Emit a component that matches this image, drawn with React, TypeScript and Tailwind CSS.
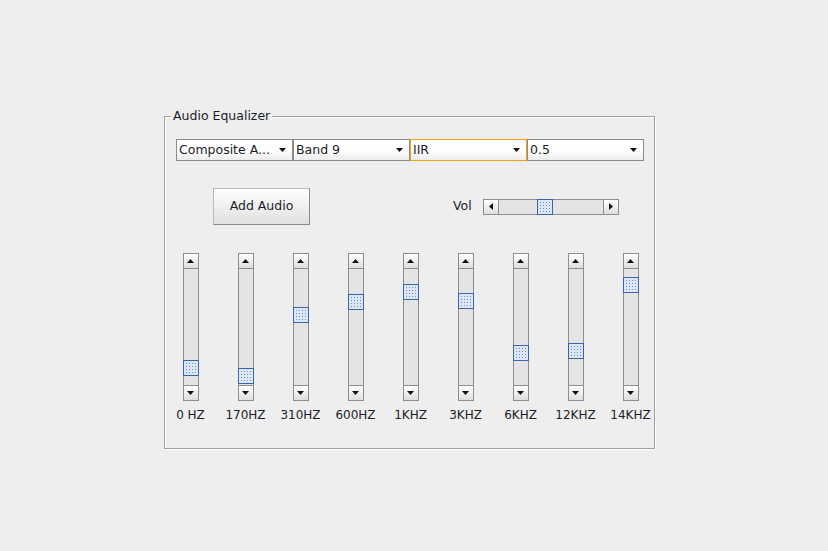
import React from "react";

const font = { fontFamily: '"DejaVu Sans", Verdana, sans-serif' };

const combos = [
  { label: "Composite A...", focused: false },
  { label: "Band 9", focused: false },
  { label: "IIR", focused: true },
  { label: "0.5", focused: false },
];

// thumb offset inside the 116px track
const bands = [
  { label: "0 HZ", pos: 91 },
  { label: "170HZ", pos: 99 },
  { label: "310HZ", pos: 38 },
  { label: "600HZ", pos: 25 },
  { label: "1KHZ", pos: 15 },
  { label: "3KHZ", pos: 24 },
  { label: "6KHZ", pos: 76 },
  { label: "12KHZ", pos: 74 },
  { label: "14KHZ", pos: 8 },
];

const Arrow = ({ dir }: { dir: "up" | "down" | "left" | "right" }) => {
  const pts = {
    up: "0,4 7,4 3.5,0",
    down: "0,0 7,0 3.5,4",
    left: "4,0 4,7 0,3.5",
    right: "0,0 0,7 4,3.5",
  }[dir];
  const horiz = dir === "left" || dir === "right";
  return (
    <svg width={horiz ? 4 : 7} height={horiz ? 7 : 4} viewBox={horiz ? "0 0 4 7" : "0 0 7 4"}>
      <polygon points={pts} fill="#111" />
    </svg>
  );
};

const ScrollButton = ({ dir }: { dir: "up" | "down" | "left" | "right" }) => (
  <div className="w-[16px] h-[16px] shrink-0 flex items-center justify-center border border-[#8e8e8e] bg-gradient-to-b from-white to-[#dedede]">
    <Arrow dir={dir} />
  </div>
);

const Thumb = () => (
  <div className="w-[16px] h-[16px] shrink-0 border border-[#3a63b3] bg-[#dce6f5] bg-[radial-gradient(circle,#6f8fcc_0.7px,transparent_0.9px)] bg-[length:3px_3px] bg-[position:1px_1px]" />
);

const Combo = ({ label, focused }: { label: string; focused: boolean }) => (
  <div
    className={`w-[117px] h-[22px] flex items-center justify-between pl-[2px] pr-[6px] border bg-gradient-to-b from-white via-white to-[#ececec] ${
      focused ? "border-[#f0a30a]" : "border-[#8a8a8a]"
    }`}
  >
    <span className="text-[12.5px] text-[#1c1c2a] leading-none">{label}</span>
    <Arrow dir="down" />
  </div>
);

const VSlider = ({ pos }: { pos: number }) => (
  <div className="w-[16px] h-[148px] flex flex-col">
    <ScrollButton dir="up" />
    <div className="flex-1 flex flex-col bg-[#e4e4e4] border-x border-[#8e8e8e]">
      <div style={{ height: pos }} />
      <div className="-mx-px">
        <Thumb />
      </div>
    </div>
    <ScrollButton dir="down" />
  </div>
);

export default function App() {
  return (
    <div className="w-[828px] h-[551px] bg-[#eeeeee] pt-[108px] pl-[164px] text-[#1c1c2a]" style={font}>
      <fieldset className="w-[491px] min-w-0 border border-[#a0a0a0] shadow-[1px_1px_0_#ffffff,inset_1px_1px_0_#ffffff] pb-[25px]">
        <legend className="ml-[6px] px-[2px] text-[12.5px] leading-[16px] bg-[#eeeeee]">Audio Equalizer</legend>

        <div className="flex pl-[11px] mt-[15px]">
          {combos.map((c) => (
            <Combo key={c.label} {...c} />
          ))}
        </div>

        <div className="flex items-center mt-[27px] h-[37px]">
          <button className="ml-[48px] w-[97px] h-[37px] border border-[#b8b8b8] border-r-[#8a8a8a] border-b-[#8a8a8a] bg-gradient-to-b from-white to-[#e0e0e0] text-[12.5px]">
            Add Audio
          </button>
          <span className="ml-[143px] text-[12.5px]">Vol</span>
          <div className="ml-[11px] w-[136px] h-[16px] flex">
            <ScrollButton dir="left" />
            <div className="flex-1 flex bg-[#e4e4e4] border-y border-[#8e8e8e]">
              <div className="w-[38px]" />
              <div className="-my-px">
                <Thumb />
              </div>
            </div>
            <ScrollButton dir="right" />
          </div>
        </div>

        <div className="flex mt-[28px] -ml-[2px]">
          {bands.map((b) => (
            <div key={b.label} className="w-[55px] shrink-0 flex flex-col items-center">
              <VSlider pos={b.pos} />
              <span className="mt-[6px] text-[12px] leading-[16px] whitespace-nowrap">{b.label}</span>
            </div>
          ))}
        </div>
      </fieldset>
    </div>
  );
}
